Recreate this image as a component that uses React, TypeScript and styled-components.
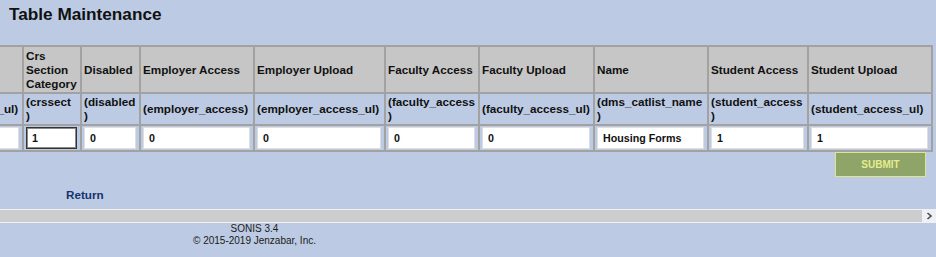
import { useLayoutEffect, useRef } from "react";
import styled, { createGlobalStyle } from "styled-components";

const GlobalStyle = createGlobalStyle`
    html, body {
        margin: 0;
        padding: 0;
        background: #bccbe3;
    }
    body {
        font-family: "Liberation Sans", Arial, sans-serif;
        color: #000;
    }
`

interface Column {
    title: string;
    field: string;
    value: string;
    width: number;
    focused?: boolean;
}

// first column is scrolled out of view, like the original page
const columns: Column[] = [
    { title: "Crse Access\nUpload", field: "(crse_access_ul)", value: "0", width: 102 },
    { title: "Crs\nSection\nCategory", field: "(crssect\n)", value: "1", width: 58, focused: true },
    { title: "Disabled", field: "(disabled\n)", value: "0", width: 59 },
    { title: "Employer Access", field: "(employer_access)", value: "0", width: 114 },
    { title: "Employer Upload", field: "(employer_access_ul)", value: "0", width: 131 },
    { title: "Faculty Access", field: "(faculty_access\n)", value: "0", width: 94 },
    { title: "Faculty Upload", field: "(faculty_access_ul)", value: "0", width: 115 },
    { title: "Name", field: "(dms_catlist_name\n)", value: "Housing Forms", width: 114 },
    { title: "Student Access", field: "(student_access\n)", value: "1", width: 100 },
    { title: "Student Upload", field: "(student_access_ul)", value: "1", width: 124 },
];

const SCROLL_LEFT = 80;

function App() {
    const scrollRef = useRef<HTMLDivElement>(null);

    useLayoutEffect(() => {
        if (scrollRef.current) scrollRef.current.scrollLeft = SCROLL_LEFT;
    }, []);

    const tableWidth = columns.reduce((sum, c) => sum + c.width, 0) + 2;

    return (
        <>
            <GlobalStyle />
            <Page>
                <Title>Table Maintenance</Title>
                <Scroller ref={scrollRef}>
                    <Sheet>
                        <Table $width={tableWidth}>
                            <thead>
                                <tr>
                                    {columns.map((c) => (
                                        <HeadCell key={c.field} $width={c.width}>{c.title}</HeadCell>
                                    ))}
                                </tr>
                            </thead>
                            <tbody>
                                <tr>
                                    {columns.map((c) => (
                                        <FieldCell key={c.field}>{c.field}</FieldCell>
                                    ))}
                                </tr>
                                <tr>
                                    {columns.map((c) => (
                                        <InputCell key={c.field}>
                                            <ValueInput defaultValue={c.value} $focused={!!c.focused} />
                                        </InputCell>
                                    ))}
                                </tr>
                            </tbody>
                        </Table>
                        <SubmitRow>
                            <SubmitButton>SUBMIT</SubmitButton>
                        </SubmitRow>
                        <ReturnRow>
                            <ReturnLink href="#">Return</ReturnLink>
                        </ReturnRow>
                    </Sheet>
                </Scroller>
                <ScrollBar>
                    <ScrollThumb />
                    <ScrollButton>
                        <svg width="14" height="14" viewBox="0 0 14 14">
                            <path d="M5.5 4 L9 7 L5.5 10" fill="none" stroke="#4a4a4a" strokeWidth="1.6" />
                        </svg>
                    </ScrollButton>
                </ScrollBar>
                <Footer>
                    <FooterLine>SONIS 3.4</FooterLine>
                    <FooterLine>© 2015-2019 Jenzabar, Inc.</FooterLine>
                </Footer>
            </Page>
        </>
    )
}

const Page = styled.div`
    width: 936px;
    min-height: 257px;
`
const Title = styled.h1`
    margin: 4px 0 21px 0;
    padding-left: 9px;
    font-size: 17.2px;
    line-height: 20px;
    font-weight: 700;
    color: #111;
`
const Scroller = styled.div`
    width: 936px;
    overflow-x: auto;
    overflow-y: hidden;
    scrollbar-width: none;
    &::-webkit-scrollbar {
        display: none;
    }
`
const Sheet = styled.div`
    width: max-content;
    padding-right: 4px;
`
interface ITable {
    $width: number;
}
const Table = styled.table<ITable>`
    width: ${props => props.$width}px;
    table-layout: fixed;
    border-collapse: separate;
    border-spacing: 0;
    border-top: 2px solid #a2a2a2;
    border-left: 2px solid #a2a2a2;
    font-size: 11.7px;
    line-height: 14px;
    font-weight: 700;
`
interface IHeadCell {
    $width: number;
}
const HeadCell = styled.th<IHeadCell>`
    box-sizing: border-box;
    width: ${props => props.$width}px;
    padding: 2px 2px 1px 2px;
    background: #c6c6c6;
    border-right: 2px solid #a2a2a2;
    border-bottom: 2px solid #a2a2a2;
    text-align: left;
    vertical-align: middle;
    white-space: pre-line;
    font-weight: 700;
    color: #111;
`
const FieldCell = styled.td`
    box-sizing: border-box;
    padding: 1px 2px;
    border-right: 2px solid #a2a2a2;
    border-bottom: 2px solid #a2a2a2;
    vertical-align: middle;
    white-space: pre-line;
    color: #111;
`
const InputCell = styled.td`
    box-sizing: border-box;
    padding: 1px 3px 1px 2px;
    border-right: 2px solid #a2a2a2;
    border-bottom: 2px solid #a2a2a2;
`
interface IValueInput {
    $focused: boolean;
}
const ValueInput = styled.input<IValueInput>`
    display: block;
    box-sizing: border-box;
    width: 100%;
    height: 22px;
    margin: 0;
    padding: 0 0 0 5px;
    background: #fff;
    border: 1px solid ${props => props.$focused ? "#333" : "#dedede"};
    box-shadow: ${props => props.$focused ? "inset 0 0 0 1px #8a8a8a" : "none"};
    outline: none;
    font-family: "Liberation Sans", Arial, sans-serif;
    font-size: 10.7px;
    font-weight: 700;
    color: #111;
`
const SubmitRow = styled.div`
    display: flex;
    justify-content: flex-end;
    padding-right: 7px;
`
const SubmitButton = styled.button`
    width: 91px;
    height: 25px;
    margin: 0;
    background: #8fa468;
    border: 1px solid #dfe48e;
    color: #e4ec8e;
    font-family: "Liberation Sans", Arial, sans-serif;
    font-size: 10px;
    font-weight: 700;
    cursor: pointer;
`
const ReturnRow = styled.div`
    padding: 10px 0 7px 146px;
    line-height: 14px;
`
const ReturnLink = styled.a`
    font-size: 11.7px;
    font-weight: 700;
    color: #16336f;
    text-decoration: none;
`
const ScrollBar = styled.div`
    display: flex;
    height: 14px;
    background: #eef0f3;
`
const ScrollThumb = styled.div`
    flex: 1;
    margin: 1px 0;
    background: #cdcdcd;
`
const ScrollButton = styled.div`
    width: 14px;
    display: flex;
    align-items: center;
    justify-content: center;
`
const Footer = styled.div`
    width: 509px;
    text-align: center;
    font-size: 10px;
    line-height: 12px;
    color: #1a1a1a;
`
const FooterLine = styled.div``

export default App;
